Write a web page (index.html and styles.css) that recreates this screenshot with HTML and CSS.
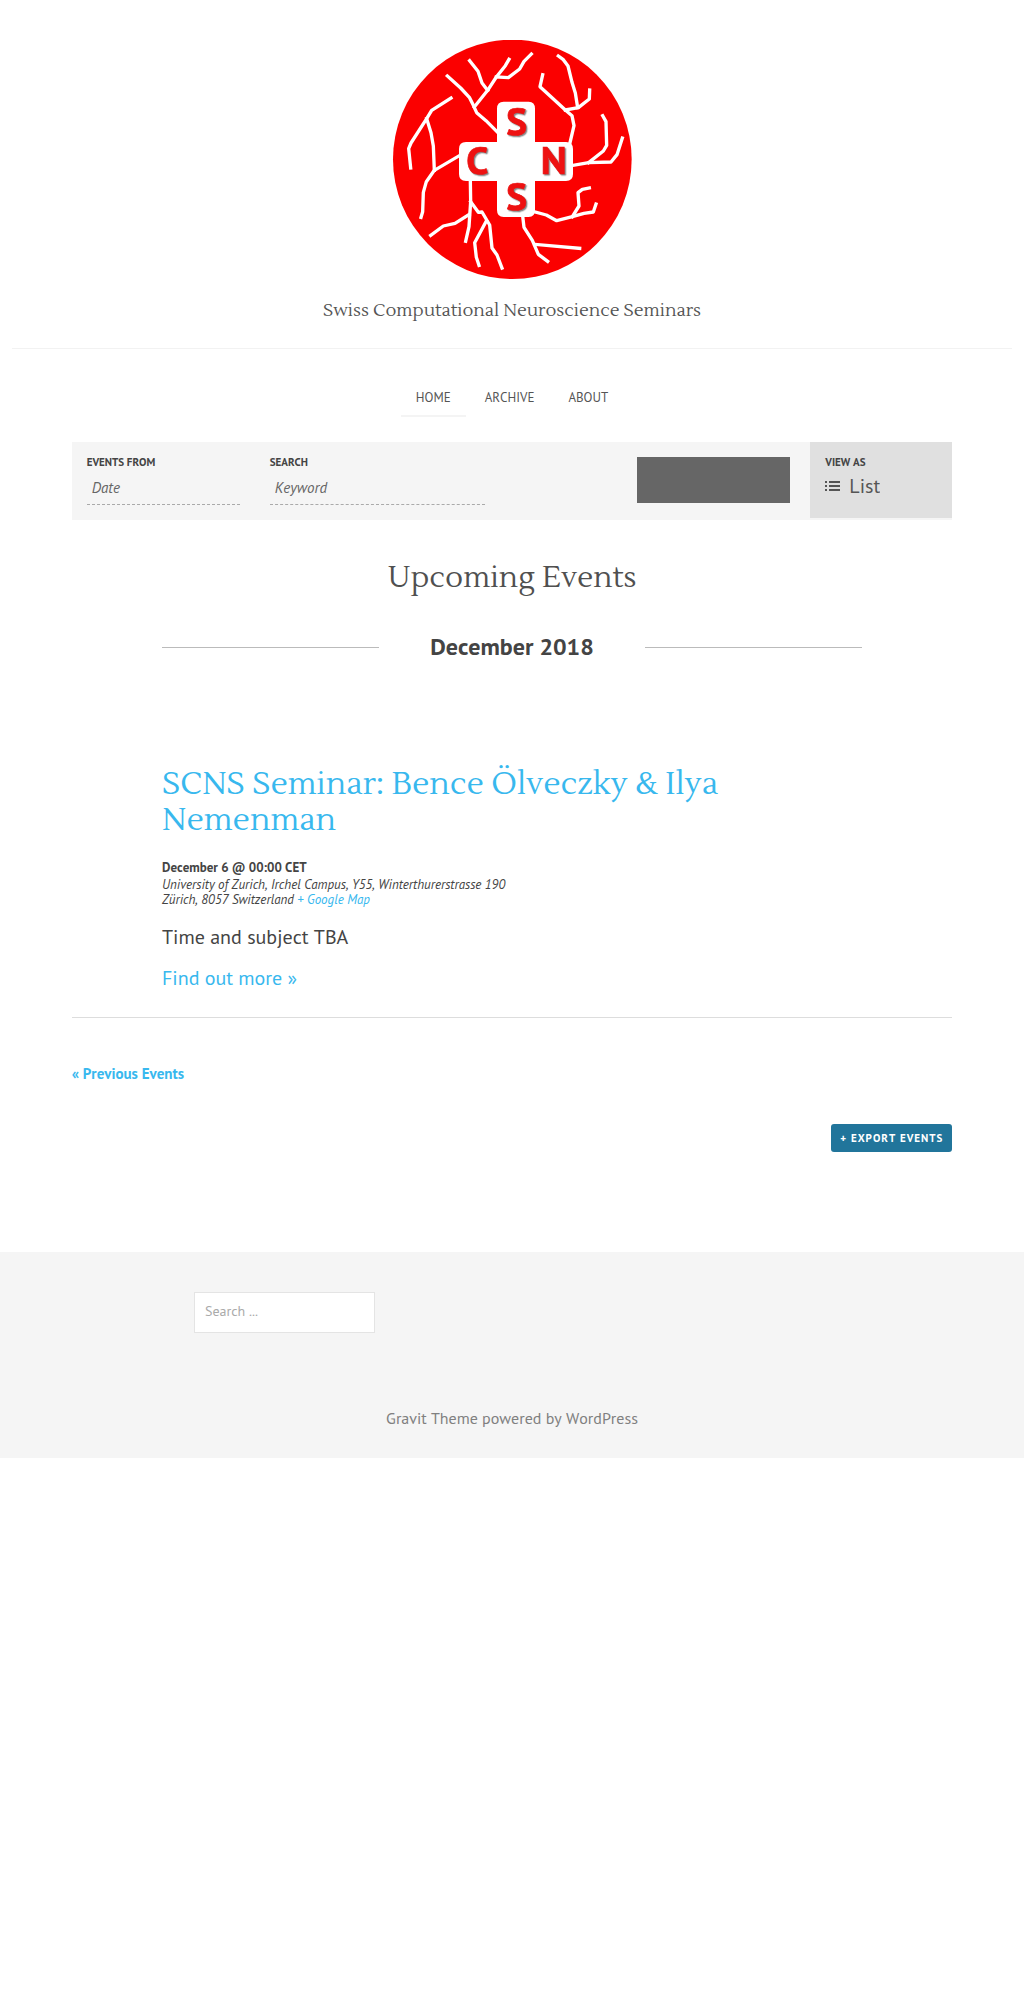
FILE: index.html
```html
<!DOCTYPE html>
<html lang="en">
<head>
<meta charset="utf-8">
<meta name="viewport" content="width=device-width, initial-scale=1">
<title>Swiss Computational Neuroscience Seminars</title>
<link rel="stylesheet" href="styles.css">
</head>
<body>
<header class="site-header">
  <a class="logo-link" href="#" aria-label="SCNS home">
    <svg class="logo" viewBox="30 30 720 720" aria-hidden="true">
      <ellipse cx="391" cy="388" rx="358" ry="359" fill="#fb0000"/>
      <g class="logo-neurons">
        <path d="M196 138 236 174 262 202 274 226 284 248 312 272 345 305"/>
        <path d="M277 231 317 181 343 141 370 107 381 88"/>
        <path d="M263 92 288 124 300 159 317 181"/>
        <path d="M343 141 379 143 413 117 426 94 448 72"/>
        <path d="M207 204 149 241 134 266 87 339 80 356 86 414"/>
        <path d="M134 266 147 308 154 348 157 421"/>
        <path d="M232 377 157 421 133 455 124 487 122 545 117 562"/>
        <path d="M265 452 266 515 261 590 251 634"/>
        <path d="M261 554 219 580 184 588 146 616"/>
        <path d="M266 515 289 547 300 546 323 585 330 654 345 675 360 714"/>
        <path d="M313 573 278 638 283 682 291 706"/>
        <path d="M422 558 426 592 451 631 469 673 497 694"/>
        <path d="M458 643 593 655"/>
        <path d="M455 545 493 555 524 572 571 560 606 550 634 546 642 522"/>
        <path d="M571 560 591 528 588 488 601 478 622 474"/>
        <path d="M564 338 576 287 570 257 550 240 515 208 474 170 482 134"/>
        <path d="M550 240 589 233 622 207 623 180"/>
        <path d="M587 233 580 189 570 157 558 108 544 89 529 78"/>
        <path d="M573 406 620 398 687 396 705 374 721 324"/>
        <path d="M620 398 664 363 674 346 672 275 662 257"/>
      </g>
      <path fill="#fff" d="M365 215H440Q459 215 459 236V336H552Q573 336 573 357V432Q573 453 552 453H459V540Q459 561 440 561H365Q345 561 345 540V453H252Q231 453 231 432V357Q231 336 252 336H345V236Q345 215 365 215Z"/>
      <g class="logo-letters">
        <text x="404" y="314">S</text>
        <text x="286" y="433">C</text>
        <text x="515" y="433">N</text>
        <text x="404" y="541">S</text>
      </g>
    </svg>
  </a>
  <p class="tagline">Swiss Computational Neuroscience Seminars</p>
</header>

<nav class="site-nav" aria-label="Main">
  <a class="nav-link nav-current" href="#" aria-current="page">HOME</a>
  <a class="nav-link" href="#">ARCHIVE</a>
  <a class="nav-link" href="#">ABOUT</a>
</nav>

<main class="content">
  <form class="events-bar">
    <div class="filters">
      <div class="field">
        <label class="bar-label" for="date">EVENTS FROM</label>
        <input class="bar-input" id="date" type="text" placeholder="Date">
      </div>
      <div class="field field-wide">
        <label class="bar-label" for="keyword">SEARCH</label>
        <input class="bar-input" id="keyword" type="text" placeholder="Keyword">
      </div>
      <button class="find-button" type="submit" aria-label="Find events"></button>
    </div>
    <div class="view">
      <label class="bar-label" for="view">VIEW AS</label>
      <div class="view-choice">
        <svg class="list-icon" viewBox="0 0 15 10" aria-hidden="true"><path d="M0 0h2v2H0zM4 0h11v2H4zM0 4h2v2H0zM4 4h11v2H4zM0 8h2v2H0zM4 8h11v2H4z"/></svg>
        <select class="view-select" id="view"><option>List</option></select>
      </div>
    </div>
  </form>

  <h1 class="page-title">Upcoming Events</h1>
  <h2 class="month">December 2018</h2>

  <article class="event">
    <h3 class="event-title"><a href="#">SCNS Seminar: Bence Ölveczky &amp; Ilya Nemenman</a></h3>
    <p class="event-time">December 6 @ 00:00 CET</p>
    <address class="event-venue">University of Zurich, Irchel Campus, Y55, Winterthurerstrasse 190<br>Zürich, 8057 Switzerland <a href="#">+ Google Map</a></address>
    <p class="event-text">Time and subject TBA</p>
    <a class="event-more" href="#">Find out more »</a>
  </article>

  <div class="events-footer">
    <a class="previous" href="#">« Previous Events</a>
    <a class="export" href="#">+ EXPORT EVENTS</a>
  </div>
</main>

<footer class="site-footer">
  <form class="widgets" role="search">
    <input class="search" type="search" placeholder="Search ..." aria-label="Search">
  </form>
  <p class="credit">Gravit Theme powered by WordPress</p>
</footer>
</body>
</html>
```
FILE: styles.css
```css
* { box-sizing: border-box; }

body {
  margin: 0;
  background: #fff;
  color: #444;
  font-family: "PT Sans", "Noto Sans", sans-serif;
  font-size: 20px;
  font-kerning: none;
  line-height: 26px;
}

h1, h2, h3, p { margin: 0; }
a { color: #38b8ee; text-decoration: none; }
input, button, select { font-family: inherit; font-kerning: inherit; border-radius: 0; }

.site-header {
  margin: 0 12px;
  padding: 40px 0 23px;
  border-bottom: 1px solid #f2f2f2;
  text-align: center;
}
.logo-link { display: block; }
.logo { display: block; width: 240px; height: 240px; margin: 0 auto; }
.logo-neurons path {
  fill: none;
  stroke: #fff;
  stroke-width: 10;
  stroke-linejoin: round;
  stroke-linecap: square;
}
.logo-letters {
  fill: #ee1111;
  stroke: #ee1111;
  stroke-width: 2;
  font-family: "PT Sans", "Open Sans", sans-serif;
  font-size: 118px;
  font-weight: 700;
  text-anchor: middle;
  filter: drop-shadow(4px 4px 2px #888);
}
.tagline {
  margin-top: 17px;
  color: #555;
  font-family: "Lustria", "Noto Serif", serif;
  font-size: 18px;
  line-height: 28px;
}

.site-nav {
  display: flex;
  justify-content: center;
  gap: 4px;
  padding: 39px 0 25px;
}
.nav-link {
  padding: 0 15px 7px;
  border-bottom: 2px solid transparent;
  color: #555;
  font-size: 13px;
  line-height: 20px;
}
.nav-current { border-color: #f4f4f4; }

.content { padding: 0 7% 100px; }

.events-bar { display: flex; background: #f5f5f5; }
.filters {
  display: flex;
  flex: 1;
  gap: 30px;
  padding: 12px 20px 15px 15px;
}
.field { width: 153px; }
.field-wide { width: 215px; }
.bar-label {
  display: block;
  font-size: 11px;
  font-weight: 700;
  line-height: 16px;
}
.bar-input {
  display: block;
  width: 100%;
  height: 35px;
  padding: 0 5px;
  border: 0;
  border-bottom: 1px dashed #aaa;
  background: none;
  font-size: 15px;
  font-style: italic;
}
.bar-input::placeholder { color: #666; opacity: 1; }
.find-button {
  width: 153px;
  height: 46px;
  margin: 3px 0 0 auto;
  border: 0;
  background: #666;
}
.view {
  width: 142px;
  margin-bottom: 2px;
  padding: 12px 15px 0;
  background: #e0e0e0;
}
.view-choice { display: flex; align-items: center; gap: 9px; height: 32px; }
.list-icon { width: 15px; height: 10px; fill: #555; }
.view-select {
  appearance: none;
  padding: 0;
  border: 0;
  background: none;
  color: #555;
  font-size: 20px;
  line-height: 26px;
}

.page-title {
  margin-top: 38px;
  color: #505050;
  font-family: "Lustria", "Noto Serif", serif;
  font-size: 30px;
  font-weight: 400;
  line-height: 40px;
  text-align: center;
}
.month {
  display: flex;
  align-items: center;
  gap: 51px;
  max-width: 700px;
  margin: 34px auto 0;
  font-size: 24px;
  line-height: 30px;
}
.month::before, .month::after {
  flex: 1;
  border-top: 1px solid #bbb;
  content: "";
}

.event { max-width: 700px; margin: 104px auto 0; }
.event-title {
  font-family: "Lustria", "Noto Serif", serif;
  font-size: 32px;
  font-weight: 400;
  line-height: 36px;
}
.event-time { margin-top: 21px; font-size: 13px; font-weight: 700; line-height: 18px; }
.event-venue { font-size: 13px; line-height: 15px; }
.event-text { margin-top: 17px; }
.event-more { display: block; margin-top: 15px; }

.events-footer {
  display: flex;
  flex-direction: column;
  gap: 40px;
  margin-top: 26px;
  padding-top: 46px;
  border-top: 1px solid #ddd;
}
.previous { font-size: 15px; font-weight: 700; line-height: 20px; }
.export {
  align-self: flex-end;
  padding: 0 9px;
  border-radius: 3px;
  background: #21759b;
  color: #fff;
  font-size: 11px;
  font-weight: 700;
  letter-spacing: 1px;
  line-height: 28px;
}

.site-footer { padding: 40px 0 27px; background: #f5f5f5; }
.widgets { max-width: 636px; margin: 0 auto; }
.search {
  appearance: none;
  display: block;
  width: 181px;
  height: 41px;
  padding: 0 10px 3px;
  border: 1px solid #e4e4e4;
  background: #fff;
  font-size: 14px;
}
.search::placeholder { color: #aaa; opacity: 1; }
.credit {
  margin-top: 72px;
  color: #808080;
  font-size: 16px;
  text-align: center;
}
```
